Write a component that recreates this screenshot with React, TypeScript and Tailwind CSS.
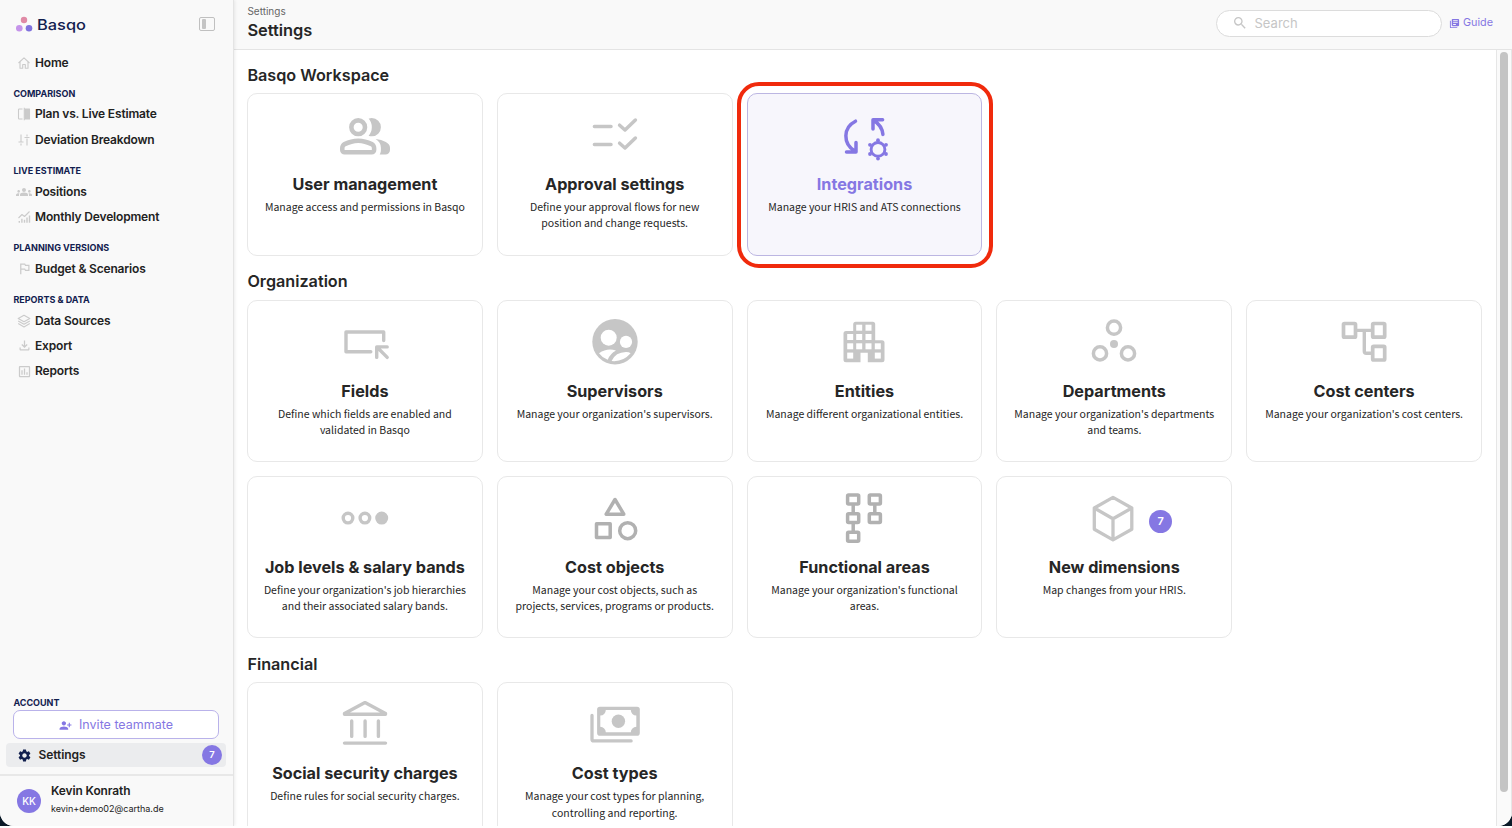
import type { ReactNode } from 'react';
import {
  MdGroups,
  MdLibraryBooks,
  MdOutlineFileDownload,
  MdOutlineInsertChart,
  MdOutlinedFlag,
  MdPersonAddAlt1,
  MdSearch,
  MdSettings
} from 'react-icons/md';

type GlyphProps = { children: ReactNode; width?: number; className?: string };

// Card glyphs are drawn on a 60px board
const Glyph = ({ children, width = 3.5, className = 'text-[#c6c6c6]' }: GlyphProps) => (
  <svg
    viewBox="0 0 60 60"
    className={`block size-[60px] ${className}`}
    fill="none"
    stroke="currentColor"
    strokeWidth={width}
    strokeLinecap="round"
    strokeLinejoin="round"
  >
    {children}
  </svg>
);

const UsersGlyph = () => (
  <Glyph>
    <g transform="translate(2.74 58.56) scale(.0568)" fill="currentColor" stroke="none">
      <path d="M40-272q0-34 17.5-62.5T104-378q62-31 126-46.5T360-440q66 0 130 15.5T616-378q29 15 46.5 43.5T680-272v32q0 33-23.5 56.5T600-160H120q-33 0-56.5-23.5T40-240v-32Zm800 112H738q11-18 16.5-38.5T760-240v-40q0-44-24.5-84.5T666-434q51 6 96 20.5t84 35.5q36 20 55 44.5t19 53.5v40q0 33-23.5 56.5T840-160ZM247-527q-47-47-47-113t47-113q47-47 113-47t113 47q47 47 47 113t-47 113q-47 47-113 47t-113-47Zm466 0q-47 47-113 47-11 0-28-2.5t-28-5.5q27-32 41.5-71t14.5-81q0-42-14.5-81T544-792q14-5 28-6.5t28-1.5q66 0 113 47t47 113q0 66-47 113ZM120-240h480v-32q0-11-5.5-20T580-306q-54-27-109-40.5T360-360q-56 0-111 13.5T140-306q-9 5-14.5 14t-5.5 20v32Zm296.5-343.5Q440-607 440-640t-23.5-56.5Q393-720 360-720t-56.5 23.5Q280-673 280-640t23.5 56.5Q327-560 360-560t56.5-23.5Z" />
    </g>
  </Glyph>
);

const ApprovalGlyph = () => (
  <Glyph>
    <path d="M9.4 21.4H26M9.4 39.4H26M34.6 20.2l5.4 4.8 10.4-10M34.6 38.2l5.4 4.8 10.4-10" />
  </Glyph>
);

const gearTeeth = [
  [0, -9.2], [0, 9.2],
  [-8, -4.6], [8, -4.6],
  [-8, 4.6], [8, 4.6]
];

const IntegrationsGlyph = () => (
  <Glyph className="text-[#8577e3]">
    <path d="M21.500 16.200C9 22.500 8.500 38.500 21 46.200M12.500 47h9.500v-9.400M48.600 14.800H39v9.200M39.400 15.200c5.800 3.500 9 8 9.500 14.200" />
    <g transform="translate(44 44.400)">
      <circle r="6.9" strokeWidth="2.900" />
      {gearTeeth.map(([x, y]) => (
        <circle key={`${x},${y}`} cx={x} cy={y} r="1.9" fill="currentColor" stroke="none" />
      ))}
    </g>
  </Glyph>
);

const FieldsGlyph = () => (
  <Glyph width={3.4}>
    <path d="M48.700 28.500V20H11v19.700h24.800M41.700 45.400V34.900h10.500M42.400 35.500l9.800 9.900" />
  </Glyph>
);

const SupervisorsGlyph = () => (
  <Glyph>
    <circle cx="30" cy="29.8" r="22.7" fill="currentColor" stroke="none" />
    <g fill="white" stroke="none">
      <circle cx="23.7" cy="25.7" r="8" />
      <circle cx="41" cy="29.9" r="6.1" />
      <path d="M14 41.200Q22.500 35.400 31 38.600 25 42 22.700 47.700 17.300 45.800 14 41.200Z" />
      <path d="M26.600 49Q30.500 40.200 41 40 43.800 39.900 45.600 41.300 38 50.200 26.600 49Z" />
    </g>
  </Glyph>
);

const entityWindows = [
  [25.2, 15.7], [34.5, 15.7],
  [16.2, 25], [25.2, 25], [34.5, 25],
  [16.2, 34.3], [25.2, 34.3], [34.5, 34.3], [43.8, 34.3],
  [16.2, 43.6], [43.8, 43.6]
];

const EntitiesGlyph = () => (
  <Glyph>
    <path
      d="M12 18.900h7.200V12.200a2.500 2.500 0 0 1 2.500-2.500h17a2.500 2.500 0 0 1 2.500 2.500v16.100h6.800a2.500 2.500 0 0 1 2.500 2.500v16.900a2.500 2.500 0 0 1-2.500 2.500H33.800v-9.500h-7.300v9.500H12a2.500 2.500 0 0 1-2.500-2.500V21.400a2.500 2.500 0 0 1 2.500-2.500Z"
      fill="currentColor"
      stroke="none"
    />
    {entityWindows.map(([x, y]) => (
      <rect key={`${x}-${y}`} x={x - 3} y={y - 3} width="6" height="6" fill="white" stroke="none" />
    ))}
  </Glyph>
);

const DepartmentsGlyph = () => (
  <Glyph>
    <circle cx="30" cy="15.7" r="6.6" />
    <circle cx="16" cy="41.4" r="6.6" />
    <circle cx="44" cy="41.4" r="6.6" />
    <circle cx="30" cy="32" r="4" fill="currentColor" stroke="none" />
  </Glyph>
);

const CostCentersGlyph = () => (
  <Glyph width={3.7}>
    <rect x="9.5" y="11.5" width="12" height="13.7" rx="1" />
    <rect x="38.7" y="11.5" width="12" height="13.7" rx="1" />
    <rect x="38.7" y="34.3" width="12" height="13.7" rx="1" />
    <path d="M22 18.400h16M30.300 18.400V39.300q0 2 2 2H38" strokeWidth="3.4" />
  </Glyph>
);

const JobLevelsGlyph = () => (
  <Glyph width={3.4}>
    <circle cx="13" cy="30.1" r="4.8" />
    <circle cx="29.9" cy="30.1" r="4.8" />
    <circle cx="46.7" cy="30.1" r="4.8" fill="currentColor" />
  </Glyph>
);

const CostObjectsGlyph = () => (
  <Glyph className="text-[#b1b1b1]">
    <path d="M30 11.500 21.200 26.200h17.600Z" />
    <rect x="11.5" y="35.8" width="13.7" height="13.7" />
    <circle cx="42.7" cy="42.7" r="8" />
  </Glyph>
);

const FunctionalAreasGlyph = () => (
  <Glyph className="text-[#b1b1b1]">
    <rect x="13.6" y="7.1" width="11.1" height="8.9" rx="1" />
    <rect x="13.6" y="25.7" width="11.1" height="8.9" rx="1" />
    <rect x="13.6" y="44.3" width="11.1" height="8.9" rx="1" />
    <rect x="35.3" y="7.1" width="11.1" height="8.9" rx="1" />
    <rect x="35.3" y="25.7" width="11.1" height="8.9" rx="1" />
    <path d="M19.200 17v8M19.200 35.500v8M40.800 17v8" />
  </Glyph>
);

const DimensionsGlyph = () => (
  <Glyph width={3.3}>
    <path d="M29 9.400 10.300 20v21.300L29 51.900l18.800-10.600V20ZM10.300 20 29 30.700 47.800 20M29 30.700v21" />
  </Glyph>
);

const BankGlyph = () => (
  <Glyph width={3.4}>
    <path d="M9.500 19.600 30 8.600l20.500 11v.600h-41ZM16.700 27v15.400M30.100 27v15.400M43.400 27v15.400M9.500 49.100h41" />
  </Glyph>
);

const CostTypesGlyph = () => (
  <Glyph width={3.3}>
    <rect x="12.1" y="12.7" width="42.7" height="29" rx="2.8" fill="currentColor" stroke="none" />
    <path
      d="M20.800 16h25a5.500 5.500 0 0 0 5.500 5.500v11.300a5.500 5.500 0 0 0-5.500 5.500h-25a5.500 5.500 0 0 0-5.500-5.500V21.500a5.500 5.500 0 0 0 5.500-5.500Z"
      fill="white"
      stroke="none"
    />
    <circle cx="33.4" cy="27.3" r="6.7" fill="currentColor" stroke="none" />
    <path d="M7 21.500v23.700q0 1.700 1.700 1.700h37.400" />
  </Glyph>
);

const SmallIcon = ({ children }: { children: ReactNode }) => (
  <svg
    viewBox="0 0 14 14"
    className="size-[14px]"
    fill="none"
    stroke="currentColor"
    strokeWidth="1.1"
    strokeLinejoin="round"
  >
    {children}
  </svg>
);

const HomeIcon = () => (
  <SmallIcon>
    <path d="M1.500 7 7 1.800 12.500 7M3 6v6.300h2.700V8.500h2.600v3.800H11V6" />
  </SmallIcon>
);

const CompareIcon = () => (
  <SmallIcon>
    <path d="M5.500 2H2.300q-.8 0-.8.800v8.400q0 .8.800.8h3.200" />
    <path d="M7.300.8v12.400" />
    <path d="M8 2h4.500v10H8Z" fill="currentColor" />
  </SmallIcon>
);

const DeviationIcon = () => (
  <SmallIcon>
    <path d="M4 1.500v7M4 10.500v2M1.500 9h5M10 12.500v-7M10 1.500v2M7.500 4.500h5" />
  </SmallIcon>
);

const TrendIcon = () => (
  <SmallIcon>
    <path d="M1.500 8 5 4.500l2.500 2 5-5" />
    <path d="M2.300 12.800V11M4.900 12.800V8.800M7.500 12.800V9.800M10 12.800V7.500M12.500 12.800V5.500" strokeWidth="1.4" />
  </SmallIcon>
);

const LayersIcon = () => (
  <SmallIcon>
    <path d="M7 1.200 1.200 4.500 7 7.800l5.800-3.300ZM1.200 7 7 10.300 12.800 7M1.200 9.600 7 12.900l5.800-3.300" />
  </SmallIcon>
);

const navGroups = [
  { title: '', items: [{ label: 'Home', icon: <HomeIcon /> }] },
  {
    title: 'Comparison',
    items: [
      { label: 'Plan vs. Live Estimate', icon: <CompareIcon /> },
      { label: 'Deviation Breakdown', icon: <DeviationIcon /> }
    ]
  },
  {
    title: 'Live Estimate',
    items: [
      { label: 'Positions', icon: <MdGroups size={16} /> },
      { label: 'Monthly Development', icon: <TrendIcon /> }
    ]
  },
  { title: 'Planning Versions', items: [{ label: 'Budget & Scenarios', icon: <MdOutlinedFlag size={15} /> }] },
  {
    title: 'Reports & Data',
    items: [
      { label: 'Data Sources', icon: <LayersIcon /> },
      { label: 'Export', icon: <MdOutlineFileDownload size={15} /> },
      { label: 'Reports', icon: <MdOutlineInsertChart size={15} /> }
    ]
  }
];

type SettingsItem = {
  title: string;
  text: string;
  icon: ReactNode;
  badge?: number;
  active?: boolean;
};

const sections: { title: string; items: SettingsItem[] }[] = [
  {
    title: 'Basqo Workspace',
    items: [
      { title: 'User management', text: 'Manage access and permissions in Basqo', icon: <UsersGlyph /> },
      { title: 'Approval settings', text: 'Define your approval flows for new position and change requests.', icon: <ApprovalGlyph /> },
      { title: 'Integrations', text: 'Manage your HRIS and ATS connections', icon: <IntegrationsGlyph />, active: true }
    ]
  },
  {
    title: 'Organization',
    items: [
      { title: 'Fields', text: 'Define which fields are enabled and validated in Basqo', icon: <FieldsGlyph /> },
      { title: 'Supervisors', text: "Manage your organization's supervisors.", icon: <SupervisorsGlyph /> },
      { title: 'Entities', text: 'Manage different organizational entities.', icon: <EntitiesGlyph /> },
      { title: 'Departments', text: "Manage your organization's departments and teams.", icon: <DepartmentsGlyph /> },
      { title: 'Cost centers', text: "Manage your organization's cost centers.", icon: <CostCentersGlyph /> },
      { title: 'Job levels & salary bands', text: "Define your organization's job hierarchies and their associated salary bands.", icon: <JobLevelsGlyph /> },
      { title: 'Cost objects', text: 'Manage your cost objects, such as projects, services, programs or products.', icon: <CostObjectsGlyph /> },
      { title: 'Functional areas', text: "Manage your organization's functional areas.", icon: <FunctionalAreasGlyph /> },
      { title: 'New dimensions', text: 'Map changes from your HRIS.', icon: <DimensionsGlyph />, badge: 7 }
    ]
  },
  {
    title: 'Financial',
    items: [
      { title: 'Social security charges', text: 'Define rules for social security charges.', icon: <BankGlyph /> },
      { title: 'Cost types', text: 'Manage your cost types for planning, controlling and reporting.', icon: <CostTypesGlyph /> }
    ]
  }
];

const SettingsCard = ({ title, text, icon, badge, active }: SettingsItem) => (
  <button
    type="button"
    className={`relative flex h-[162.4px] flex-col items-center rounded-[10px] border px-3 pt-[11px] ${
      active ? 'border-[#bcb6e2] bg-[#f7f6fc]' : 'border-[#e8e8e8] bg-white'
    }`}
  >
    {icon}
    {badge && (
      <span className="absolute top-[33px] right-[59px] flex size-[23px] items-center justify-center rounded-full bg-[#8577e3] text-[11px] font-semibold text-white">
        {badge}
      </span>
    )}
    <span className={`mt-[7px] text-[16.2px] leading-6 font-bold whitespace-nowrap ${active ? 'text-[#8577e3]' : 'text-[#262626]'}`}>
      {title}
    </span>
    <span className="mt-[2.8px] w-[204px] font-['Noto_Sans_CJK_SC',sans-serif] text-[10.5px] leading-[16.4px] text-[#262626]">
      {text}
    </span>
    {active && (
      <span className="pointer-events-none absolute -top-[12px] -right-[12px] -bottom-[13px] -left-[11px] rounded-[22px] border-4 border-[#f02a0c]" />
    )}
  </button>
);

const Sidebar = () => (
  <aside className="z-10 flex w-[234px] shrink-0 flex-col border-r border-[#e4e4e4] bg-[#f9f9f9] shadow-[1px_0_3px_rgba(0,0,0,0.08)]">
    <div className="flex h-12 shrink-0 items-center justify-between pr-[18px] pl-4">
      <div className="flex items-center gap-[4px]">
        <svg viewBox="0 0 17 17" className="size-[17px]">
          <circle cx="8" cy="4" r="3.2" fill="#e08aa6" />
          <circle cx="3.3" cy="12.2" r="3.3" fill="#c594ea" />
          <circle cx="13" cy="12.2" r="3.3" fill="#8072dd" />
        </svg>
        <span className="mt-px origin-left scale-x-[1.13] text-[14.5px] font-medium text-[#12204f]">Basqo</span>
      </div>
      <span className="flex h-[14px] w-4 rounded-[2px] border border-[#c0c0c0] p-px">
        <span className="ml-px h-full w-1 rounded-[1px] bg-[#c4c4c4]" />
      </span>
    </div>

    <nav className="flex flex-col gap-[10.8px] pt-[2.9px]">
      {navGroups.map(({ title, items }) => (
        <div key={title} className="flex flex-col first:-mb-px">
          {title && (
            <h3 className="h-4 pl-[13.4px] text-[9px] leading-[15.2px] font-bold text-[#12204f] uppercase">{title}</h3>
          )}
          {items.map(({ label, icon }) => (
            <a key={label} className="flex h-[25.2px] items-center pl-4">
              <span className="flex w-4 justify-center text-[#cbcbcb]">{icon}</span>
              <span className="ml-[3px] text-[12px] font-[570] tracking-[-0.17px] text-[#222]">{label}</span>
            </a>
          ))}
        </div>
      ))}
    </nav>

    <div className="mt-auto">
      <h3 className="h-[14px] pl-[13.4px] text-[9px] leading-[14px] font-bold text-[#12204f]">ACCOUNT</h3>
      <button
        type="button"
        className="ml-[13px] flex h-[29px] w-[206px] items-center justify-center gap-[7px] rounded-[7px] border border-[#b9b2ea] bg-white pt-px text-[12.5px] text-[#8577e3]"
      >
        <MdPersonAddAlt1 size={13} />
        Invite teammate
      </button>
      <div className="mt-[4px] ml-[6px] flex h-[24px] w-[220px] items-center rounded-[4px] bg-[#ebecee] pr-1 pl-[11px]">
        <MdSettings size={15} className="text-[#12204f]" />
        <span className="ml-[6.5px] text-[12px] font-[570] tracking-[-0.08px] text-[#222]">Settings</span>
        <span className="ml-auto flex size-5 items-center justify-center rounded-full bg-[#8577e3] text-[9.5px] font-semibold text-white">7</span>
      </div>
      <div className="mt-[7px] flex h-[52px] items-center border-t-2 border-[#e8e8e8] pl-[17px]">
        <span className="flex size-6 items-center justify-center rounded-full bg-[#8577e3] text-[10px] font-medium text-white">KK</span>
        <div className="mb-[4px] ml-[10px] flex flex-col">
          <span className="text-[11.9px] leading-[17px] font-[570] tracking-[-0.08px] text-[#222]">Kevin Konrath</span>
          <span className="mt-[3px] text-[9px] leading-[14px] text-[#222]">kevin+demo02@cartha.de</span>
        </div>
      </div>
    </div>
  </aside>
);

const Header = () => (
  <header className="flex h-[50px] shrink-0 items-center border-b border-[#e4e4e4] bg-[#f9f9f9] pl-[13.4px]">
    <div className="mb-[5px] flex flex-col">
      <span className="text-[10px] leading-[14px] text-[#666]">Settings</span>
      <h1 className="mt-px text-[16.4px] leading-[22px] font-semibold text-[#262626]">Settings</h1>
    </div>
    <div className="mb-[3px] ml-auto flex h-[27px] w-[226px] items-center rounded-full border border-[#dcdcdc] bg-white pl-[15px] text-[#c6c6c6]">
      <MdSearch size={16} />
      <span className="mt-px ml-[7px] text-[13px]">Search</span>
    </div>
    <a className="mr-[19px] mb-[2px] ml-[7px] flex items-center gap-[3.5px] text-[10.8px] text-[#8577e3]">
      <MdLibraryBooks size={11} />
      Guide
    </a>
  </header>
);

export default function App() {
  return (
    <div className="h-[828px] w-[1512px] overflow-hidden bg-white font-['Inter',sans-serif]">
      <div className="h-[826px] bg-[#0b1a28]">
        <div className="flex h-full overflow-hidden rounded-b-[14px] bg-white">
          <Sidebar />
          <div className="flex min-w-0 flex-1 flex-col">
            <Header />
            <div className="flex min-h-0 flex-1">
              <main className="flex flex-1 flex-col gap-[15.75px] overflow-hidden pt-[14.85px] pr-[14px] pl-[13px]">
                {sections.map(({ title, items }) => (
                  <section key={title}>
                    <h2 className="mb-[8.4px] pl-[0.4px] text-[16.2px] leading-5 font-semibold text-[#262626]">{title}</h2>
                    <div className="grid grid-cols-5 gap-x-[14px] gap-y-[13.7px]">
                      {items.map((item) => (
                        <SettingsCard key={item.title} {...item} />
                      ))}
                    </div>
                  </section>
                ))}
              </main>
              <div className="flex w-4 shrink-0 justify-center border-x border-[#e6e6e6] bg-[#fafafa] pt-[2px]">
                <div className="h-[740px] w-2 rounded-full bg-[#c4c4c4]" />
              </div>
            </div>
          </div>
        </div>
      </div>
    </div>
  );
}
